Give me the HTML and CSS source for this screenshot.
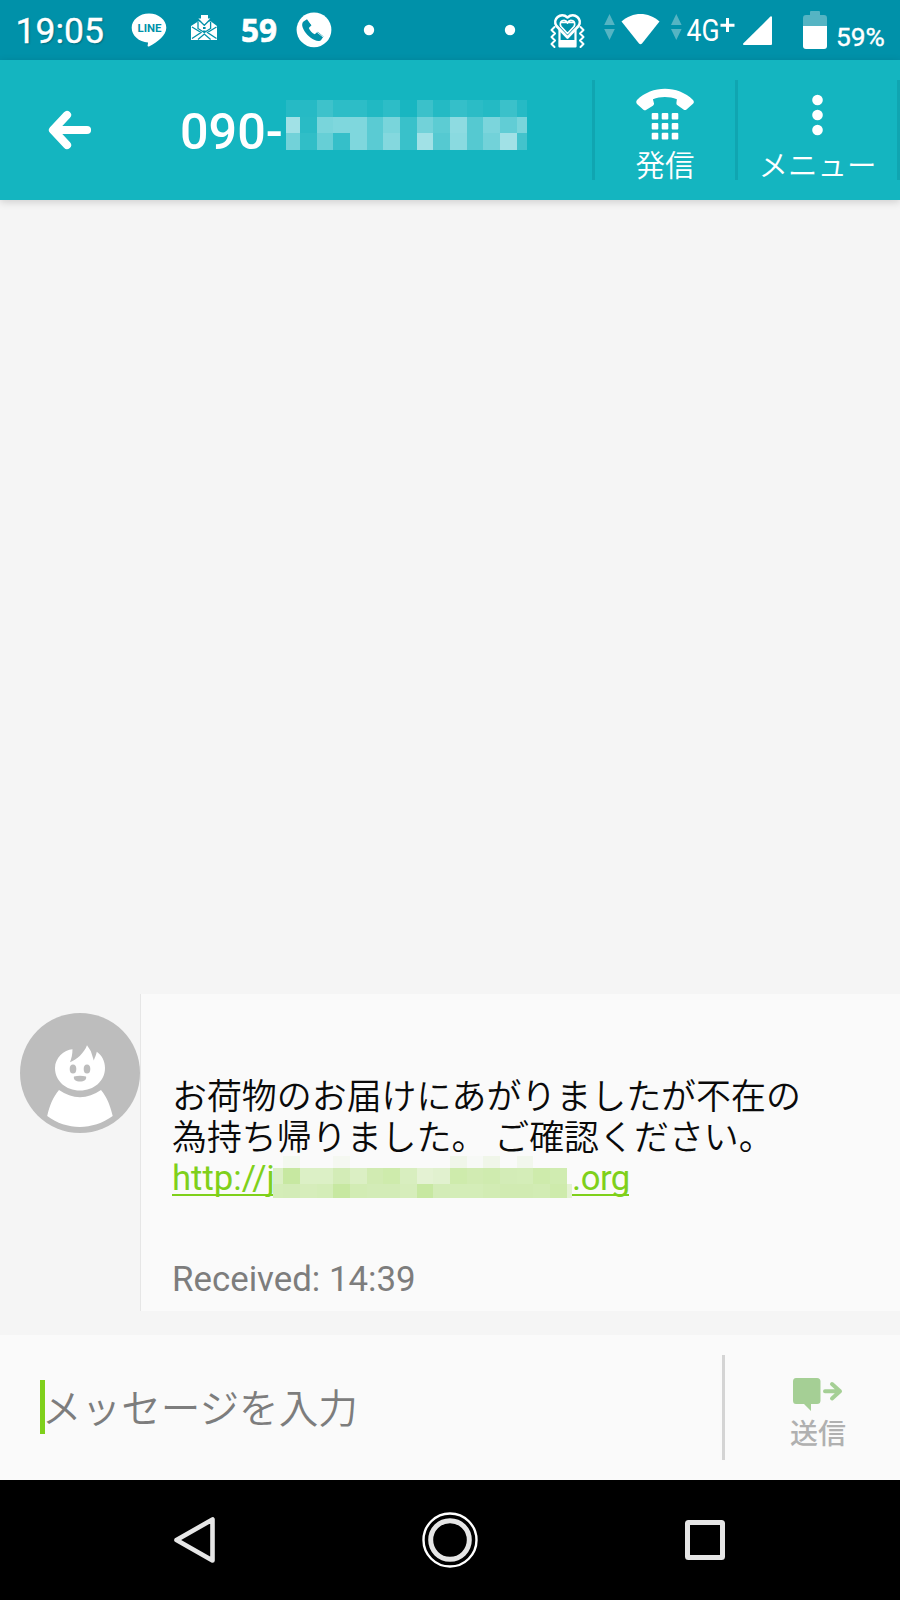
FILE: index.html
```
<!DOCTYPE html>
<html lang="ja">
<head>
<meta charset="utf-8">
<title>メッセージ</title>
<link rel="stylesheet" href="styles.css">
</head>
<body>
<div class="phone">
  <div class="status">
    <span class="clock">19:05</span>
    <svg class="ic line" width="38" height="60" viewBox="130 0 38 60"><path d="M149 13.500c9.600 0 17.300 6.300 17.300 14.200 0 7.300-8.500 14.500-17.300 18.700-1.300.5-1.600-.2-1.300-1.300l.4-2.700c-9.200-.5-16.400-6.800-16.400-14.700 0-7.900 7.700-14.200 17.300-14.200z" fill="#fff"/><text x="137.500" y="32.200" class="line-word" textLength="24" lengthAdjust="spacingAndGlyphs">LINE</text></svg>
    <svg class="ic mail" width="28" height="60" viewBox="190 0 28 60"><path d="M191 26l7-4.500h13l6 4.500v14h-26z" fill="#fff"/><path d="M192 27l9 5.500-9 6M216.500 27l-9 5.500 9 6M198 39.500l6.300-5.500 6.300 5.500M198 22v6.500l6.300 4 6.300-4v-6.500" fill="none" stroke="#0091a9" stroke-width="1.300"/><path d="M199.500 20.500l4.800 4.800 4.800-4.800" fill="none" stroke="#0091a9" stroke-width="1.500"/><path d="M203 27h2.600v2h-2.600zM203 30.500h2.600v1.500h-2.600z" fill="#0091a9"/><path d="M201 15h7v3.500h2.300l-6 5.500-6-5.500h2.700z" fill="#fff"/></svg>
    <span class="count">59</span>
    <svg class="ic call-badge" width="36" height="60" viewBox="296 0 36 60"><circle cx="314" cy="29.800" r="17.400" fill="#fff"/><path d="M303.500 21.500l3.500-2.300 4.500 6-2.700 2.800c1.300 3 3.200 5 6 6.300l2.800-2.600 5.900 4.700-2.400 3.500c-1.200 1.500-4 1.200-6.500 0-5.500-2.500-10-7.300-12-12.700-.8-2.300-.5-4.400.9-5.700z" fill="#0091a9"/><path d="M308.500 20.300l4.400 5.800M317.200 32.400l5.800 4.500" stroke="#fff" stroke-width=".8"/></svg>
    <svg class="ic dot-a" width="12" height="60" viewBox="363 0 12 60"><circle cx="369" cy="30" r="5.200" fill="#fff"/></svg>
    <svg class="ic dot-b" width="12" height="60" viewBox="504 0 12 60"><circle cx="510" cy="30" r="5.200" fill="#fff"/></svg>
    <svg class="ic vibrate" width="36" height="60" viewBox="550 0 36 60" fill="none" stroke="#fff" stroke-width="2.200" stroke-linecap="round" stroke-linejoin="round"><path d="M559.500 30v16.500h16v-16.500"/><path d="M560 41h15v5h-15z" fill="#fff"/><path d="M567.500 37.500l-11-11.500c-4.500-6.500 4-14.500 11-8.500 7-6 15.500 2 11 8.500z" fill="#0091a9" stroke-width="2.600"/><path d="M567.500 33.500l-6.500-7c-3-5.500 4-8.500 6.500-3.500 2.500-5 9.500-2 6.500 3.500zM561 22.500h13" stroke-width="1.700"/><path d="M554.500 27l-3 3 3.500 3.500-3.500 3.500 3.500 3.500-3.500 3.500 3 3M580.500 27l3 3-3.500 3.500 3.500 3.500-3.500 3.500 3.500 3.500-3 3" stroke-width="2"/></svg>
    <svg class="ic arrows-a" width="12" height="60" viewBox="604 0 12 60"><path d="M609.500 14l5.300 11h-10.600zM609.500 40l5.300-11h-10.600z" fill="#55b4c3"/></svg>
    <svg class="ic wifi" width="40" height="60" viewBox="620 0 40 60"><path d="M621.500 21.500c11-10 27-10 38 0l-17.500 22q-1.500 1.500-3 0z" fill="#fff"/></svg>
    <svg class="ic arrows-b" width="12" height="60" viewBox="671 0 12 60"><path d="M676.300 14l5.300 11h-10.600zM676.300 40l5.300-11h-10.600z" fill="#55b4c3"/></svg>
    <svg class="ic network" width="50" height="60" viewBox="686 0 50 60"><text x="686.500" y="41" class="net-word" textLength="33" lengthAdjust="spacingAndGlyphs">4G</text><path d="M720.500 25.200h14M727.500 18v14" stroke="#fff" stroke-width="3"/></svg>
    <svg class="ic signal" width="31" height="60" viewBox="742 0 31 60"><path d="M744 45h27q1 0 1-1v-27q-.6-1.200-1.600-.4l-27.200 27q-.6 1.200.8 1.400z" fill="#fff"/></svg>
    <svg class="ic battery" width="24" height="60" viewBox="803 0 24 60"><path d="M810 15v-3q0-1 1-1h8q1 0 1 1v3h4q3 0 3 3v8h-24v-8q0-3 3-3z" fill="#55b4c3"/><path d="M803 26h24v20q0 3-3 3h-18q-3 0-3-3z" fill="#fff"/></svg>
    <span class="percent">59%</span>
  </div>

  <header class="bar">
    <svg class="back" width="46" height="42" viewBox="47 109 46 42" fill="none" stroke="#fff" stroke-width="8.200" stroke-linecap="round" stroke-linejoin="round"><path d="M67 115l-14 15 14 15M54 130h33"/></svg>
    <div class="title"><span class="number">090-</span><svg class="masked" width="242" height="50" viewBox="286 100 242 50"></svg></div>
    <div class="action call">
      <svg width="60" height="52" viewBox="635 88 60 52" fill="#fff"><path d="M637 100c15-15 41-15 56 0q1.700 2 0 3.800l-6.500 5.700q-1.500 1-3 0l-6-4.200q-1.500-1.300-1-3l.4-3c-7.500-3.200-16.500-3.200-24 0l1 3.700q.5 1.700-1 2.800l-6.500 4q-1.500 1-3 0l-6.400-5.900q-1.500-2 0-3.900z"/><g><rect x="651.700" y="113" width="6.600" height="6.600" rx="1"/><rect x="661.700" y="113" width="6.600" height="6.600" rx="1"/><rect x="671.700" y="113" width="6.600" height="6.600" rx="1"/><rect x="651.700" y="122.900" width="6.600" height="6.600" rx="1"/><rect x="661.700" y="122.900" width="6.600" height="6.600" rx="1"/><rect x="671.700" y="122.900" width="6.600" height="6.600" rx="1"/><rect x="651.700" y="132.800" width="6.600" height="6.600" rx="1"/><rect x="661.700" y="132.800" width="6.600" height="6.600" rx="1"/><rect x="671.700" y="132.800" width="6.600" height="6.600" rx="1"/></g></svg>
      <span class="label">発信</span>
    </div>
    <div class="action menu">
      <svg width="60" height="52" viewBox="788 88 60 52" fill="#fff"><circle cx="817.500" cy="100" r="5.300"/><circle cx="817.500" cy="115" r="5.300"/><circle cx="817.500" cy="130" r="5.300"/></svg>
      <span class="label">メニュー</span>
    </div>
  </header>

  <main class="thread">
    <div class="message">
      <svg class="avatar" width="120" height="120" viewBox="20 1013 120 120"><circle cx="80" cy="1073" r="60" fill="#bdbdbd"/><path d="M55 1068c0-10 9-18 17.500-18.700 0 5-1 9-2.500 13 7-3 14-9 17-17 2 3 4 5.500 4.500 8l2.300 7.200c1-3 2.400-5.500 3-8.700 5 3.700 8.200 9 8.200 16.200 0 13-11 22.500-25 22.500s-25-9.500-25-22.500z" fill="#fff"/><path d="M59 1090c13 9.500 29 9.500 42 0 6 7 9.500 16.500 11.700 26-20 14.500-46 14.500-65.500 0 2-9.500 5.800-19 11.800-26z" fill="#fff"/><ellipse cx="73" cy="1069" rx="3.300" ry="4.500" fill="#bdbdbd"/><ellipse cx="87" cy="1069" rx="3.300" ry="4.500" fill="#bdbdbd"/><path d="M74 1076.500q6-1.500 12 0c1 3-2 5-6 5s-7-2-6-5z" fill="#bdbdbd"/></svg>
      <div class="card">
        <p class="body">お荷物のお届けにあがりましたが不在の<br>為持ち帰りました。 ご確認ください。</p>
        <div class="link"><span class="url head">http://j</span><svg class="masked-link" width="299" height="44" viewBox="273 1154 299 44"></svg><span class="url tail">.org</span></div>
        <p class="received">Received: 14:39</p>
      </div>
    </div>
  </main>

  <div class="composer">
    <div class="field"><span class="caret"></span><span class="hint">メッセージを入力</span></div>
    <div class="send">
      <svg width="50" height="34" viewBox="793 1376 50 34"><path d="M796 1377h21q3.500 0 3.500 3.500v19q0 3.500-3.500 3.500h-6v7l-7-7h-8q-3 0-3-3.500v-19q0-3.500 3-3.500z" fill="#a5cf95"/><path d="M825 1390.200h15M832 1383l8 7.200-8 7.200" fill="none" stroke="#a5cf95" stroke-width="4" stroke-linecap="round" stroke-linejoin="round"/></svg>
      <span class="send-label">送信</span>
    </div>
  </div>

  <nav class="nav">
    <svg width="44" height="60" viewBox="172 1510 44 60"><path d="M212.500 1519.500v41l-36-20.500z" fill="none" stroke="#e6e6e6" stroke-width="4.600" stroke-linejoin="round"/></svg>
    <svg width="60" height="60" viewBox="420 1510 60 60" fill="none"><circle cx="450" cy="1540" r="26.500" stroke="#fff" stroke-width="2.400"/><circle cx="450" cy="1540" r="19.300" stroke="#e6e6e6" stroke-width="5"/></svg>
    <svg width="44" height="60" viewBox="683 1510 44 60"><rect x="687.500" y="1522.500" width="35" height="35" rx="1" fill="none" stroke="#e6e6e6" stroke-width="5"/></svg>
  </nav>
</div>
<script src="mosaic.js"></script>
</body>
</html>
```
FILE: mosaic.js
```
// Paints the tiles that mask private text; each row lists tile opacities.
function paint(selector, color, xs, ys, rows) {
  const svg = document.querySelector(selector);
  rows.forEach((row, r) => row.forEach((alpha, c) => {
    if (!alpha) return;
    const tile = document.createElementNS('http://www.w3.org/2000/svg', 'rect');
    tile.setAttribute('x', xs[c]);
    tile.setAttribute('y', ys[r]);
    tile.setAttribute('width', xs[c + 1] - xs[c]);
    tile.setAttribute('height', ys[r + 1] - ys[r]);
    tile.setAttribute('fill', color);
    tile.setAttribute('fill-opacity', alpha);
    svg.appendChild(tile);
  }));
}
paint('.masked', '#fff',
  [286, 300, 317, 333, 350, 367, 383, 400, 417, 433, 450, 467, 483, 500, 517, 527],
  [100, 117, 133, 150],
  [
    [.08, .08, .18, .11, .11, .06, .11, .02, .17, .07, .14, .10, .07, .17, .08],
    [.60, .09, .43, .46, .46, .30, .43, .16, .40, .31, .52, .28, .44, .33, .43],
    [.40, .12, .35, .14, .46, .30, .48, .16, .60, .28, .50, .28, .40, .60, .20]
  ]);
paint('.masked-link', '#7fcf22',
  [273, 283, 300, 317, 333, 350, 367, 383, 400, 417, 433, 450, 467, 483, 500, 517, 533, 550, 567, 572],
  [1155, 1167, 1183, 1197],
  [
    [0, .05, 0, 0, .04, 0, 0, 0, 0, 0, 0, .08, .02, .08, 0, .06, 0, 0, 0],
    [.25, .41, .24, .24, .31, .25, .33, .36, .27, .18, .20, .36, .33, .35, .31, .30, .36, .34, 0],
    [.30, .31, .29, .30, .41, .32, .31, .31, .29, .41, .31, .30, .30, .32, .33, .33, .32, .36, .18]
  ]);
```
FILE: styles.css
```
* { box-sizing: border-box; }
body { margin: 0; background: #f5f5f5; }
p { margin: 0; }
svg { display: block; flex: none; }
.phone {
  width: 900px; height: 1600px; display: flex; flex-direction: column; overflow: hidden;
  font-family: Roboto, "Noto Sans CJK JP", sans-serif;
}
.status { height: 60px; flex: none; display: flex; background: #0091a9; color: #fff; white-space: nowrap; line-height: 60px; }
.clock { margin-left: 15.500px; width: 90.500px; font-size: 35.500px; text-shadow: 1px 1px 2px rgba(0,0,0,.3); padding-top: 1px; height: 60px; -webkit-text-stroke: .4px #fff; }
.line { margin-left: 24px; }
.line-word { font: bold 10.500px Roboto, sans-serif; fill: #0091a9; }
.mail { margin-left: 22px; }
.count { margin-left: 23px; width: 38px; font: bold 31.500px/60px "Noto Sans", sans-serif; -webkit-text-stroke: .6px #fff; }
.call-badge { margin-left: 17px; }
.dot-a { margin-left: 31px; }
.dot-b { margin-left: 129px; }
.vibrate { margin-left: 34px; }
.arrows-a { margin-left: 18px; }
.wifi { margin-left: 4px; }
.arrows-b { margin-left: 11px; }
.network { margin-left: 3px; }
.net-word { font: 31px Roboto, sans-serif; fill: #fff; }
.signal { margin-left: 6px; }
.battery { margin-left: 30px; }
.percent { margin-left: 9px; width: 52px; font-size: 26.300px; padding-top: 7px; height: 60px; -webkit-text-stroke: .4px #fff; }

.bar {
  height: 140px; flex: none; display: flex; align-items: center; background: #14b5c0; color: #fff;
  box-shadow: 0 2px 8px rgba(0,0,0,.16); z-index: 1; white-space: nowrap;
}
.back { margin-left: 47px; }
.title { margin-left: 87px; width: 412px; height: 140px; display: flex; align-items: center; }
.number { width: 106px; font-size: 50.300px; font-weight: 500; line-height: 60px; padding-top: 4px; }
.masked { margin-top: -10px; }
.action { height: 100px; border-left: 3px solid #10a5b1; display: flex; flex-direction: column; align-items: center; padding-top: 8px; }
.call { width: 143px; }
.menu { width: 165px; border-right: 3px solid #10a5b1; }
.label { font: 350 29.500px/40px "Noto Sans CJK JP", sans-serif; margin-top: 3px; }

.thread { height: 1135px; flex: none; background: #f5f5f5; display: flex; flex-direction: column; justify-content: flex-end; padding-bottom: 24px; }
.message { display: flex; height: 317px; padding-left: 20px; }
.avatar { margin-top: 19px; }
.card { flex: 1; background: #fafafa; border-left: 1px solid #e6e6e6; padding: 79px 0 0 31px; white-space: nowrap; }
.body { font: 350 34.950px/41px "Noto Sans CJK JP", sans-serif; color: #0a0a0a; }
.link { display: flex; height: 44px; }
.url { color: #7fd01b; font-size: 34.700px; line-height: 43px; height: 39px; margin-top: 2px; border-bottom: 2px solid #7fd01b; }
.head { width: 101px; }
.tail { width: 57px; letter-spacing: -.5px; }
.received { margin-top: 58px; font-size: 34.850px; line-height: 46px; color: #7d7d7d; }

.composer { height: 145px; flex: none; background: #fafafa; display: flex; align-items: center; }
.field { width: 725px; height: 105px; padding-left: 40px; border-right: 3px solid #d4d4d4; display: flex; align-items: center; }
.caret { width: 5px; height: 54px; background: #7fd01b; margin-top: -1px; }
.hint { font: 350 39.600px/54px "Noto Sans CJK JP", sans-serif; color: #7d7d7d; margin: -3px 0 0 -3px; }
.send { width: 175px; padding: 13px 0 0 68px; }
.send-label { display: block; font: 500 28px/40px "Noto Sans CJK JP", sans-serif; color: #b0b0b0; margin: 1px 0 0 -3px; }

.nav { height: 120px; flex: none; background: #000; display: flex; align-items: center; justify-content: space-between; padding: 0 173px 0 172px; }
```
